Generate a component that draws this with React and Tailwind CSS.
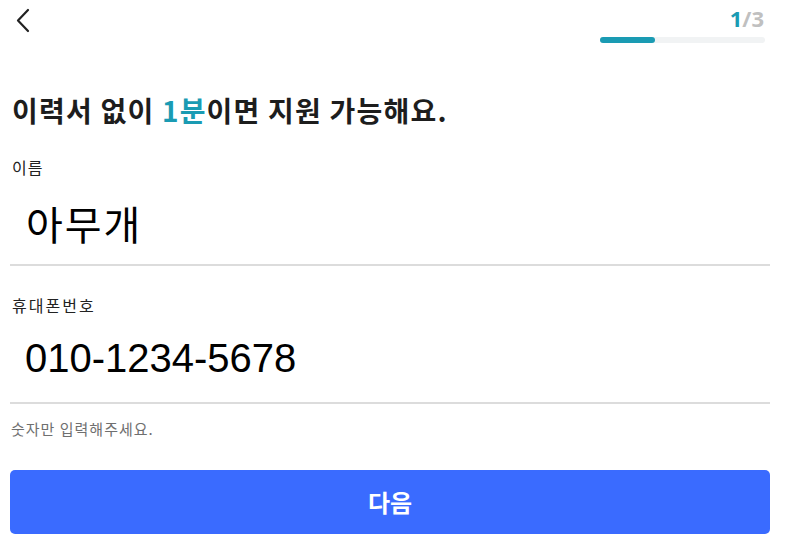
import React from "react";

export default function App() {
  return (
    <div className="w-[786px] h-[546px] bg-white overflow-hidden font-['Noto_Sans_CJK_KR',sans-serif] text-[#111]">
      <div className="flex justify-between px-[12px] pt-[5px] h-[48px]">
        <svg width="22" height="26" viewBox="0 0 22 26" className="mt-[3px] ml-[1px]">
          <path d="M15 2 L5 12.5 L15 23" fill="none" stroke="#222" strokeWidth="2.2" strokeLinecap="round" strokeLinejoin="round" />
        </svg>
        <div className="flex flex-col items-end w-[165px] mr-[9px]">
          <div className="font-['Open_Sans',sans-serif] font-bold text-[22px] leading-[26px] mr-[1px]">
            <span className="text-[#1a9bb3]">1</span>
            <span className="text-[#c0c0c0]">/3</span>
          </div>
          <div className="w-[165px] h-[6px] mt-[6px] rounded-full bg-[#f1f3f4]">
            <div className="w-[55px] h-[6px] rounded-full bg-[#1a9bb3]" />
          </div>
        </div>
      </div>
      <div className="px-[10px] w-[780px]">
        <h1 className="mt-[44px] ml-[2px] text-[28px] leading-[36px] font-bold tracking-[1.2px] text-[#1d1d1d] whitespace-nowrap">
          이력서 없이 <span className="text-[#1a9bb3]">1분</span>이면 지원 가능해요.
        </h1>
        <div className="mt-[28px] ml-[2px] text-[16px] leading-[22px] tracking-[1px] text-[#222]">이름</div>
        <div className="mt-[21px] pl-[16px] text-[40px] leading-[48px] tracking-[2px] text-black">아무개</div>
        <div className="mt-[17px] h-[2px] bg-[#dcdcdc]" />
        <div className="mt-[28px] ml-[2px] text-[16px] leading-[22px] tracking-[2px] text-[#222]">휴대폰번호</div>
        <div className="mt-[18px] pl-[15px] font-['Liberation_Sans',sans-serif] text-[40px] leading-[48px] text-black">010-1234-5678</div>
        <div className="mt-[20px] h-[2px] bg-[#dcdcdc]" />
        <div className="mt-[15px] ml-[1px] text-[15px] leading-[20px] tracking-[1px] text-[#6f6f6f]">숫자만 입력해주세요.</div>
        <button className="mt-[31px] w-full h-[64px] rounded-[5px] bg-[#3a6bff] text-white text-[24px] leading-[30px] font-bold">다음</button>
      </div>
    </div>
  );
}
